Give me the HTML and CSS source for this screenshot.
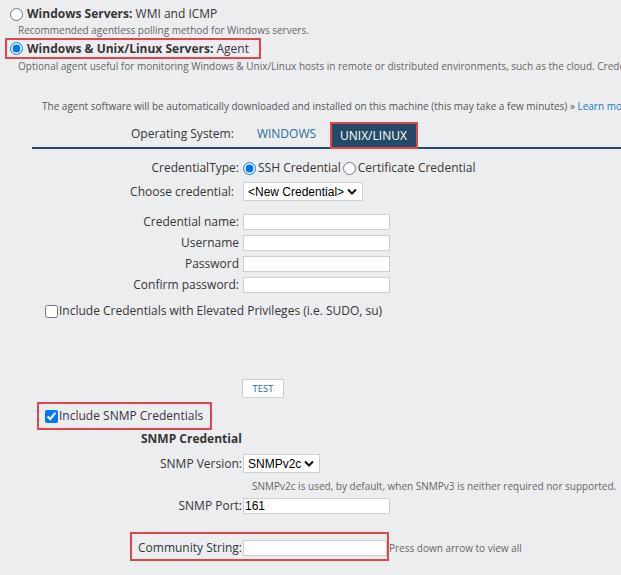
FILE: index.html
```html
<!DOCTYPE html>
<html lang="en">
<head>
    <meta charset="UTF-8">
    <title>Add Node - Polling Method</title>
    <link rel="stylesheet" href="styles.css">
</head>
<body>
    <!-- Polling method -->
    <div class="method">
        <label class="method-title"><input type="radio" name="method"><b>Windows Servers:</b>&nbsp;WMI and ICMP</label>
        <div class="method-desc">Recommended agentless polling method for Windows servers.</div>
    </div>
    <div class="method">
        <label class="method-title boxed"><input type="radio" name="method" checked><b>Windows &amp; Unix/Linux Servers:</b>&nbsp;Agent</label>
        <div class="method-desc nowrap">Optional agent useful for monitoring Windows &amp; Unix/Linux hosts in remote or distributed environments, such as the cloud. Credentials are required.</div>
    </div>

    <div class="agent-note">The agent software will be automatically downloaded and installed on this machine (this may take a few minutes) &raquo; <a href="#">Learn more</a></div>

    <div class="os-tabs">
        <span class="os-label">Operating System:</span>
        <span class="tab">WINDOWS</span>
        <span class="tab active">UNIX/LINUX</span>
    </div>

    <div class="form">
        <div class="row row-type">
            <span class="lbl">CredentialType:</span>
            <span class="ctl">
                <label><input type="radio" name="ctype" checked>SSH Credential</label>
                <label><input type="radio" name="ctype">Certificate Credential</label>
            </span>
        </div>
        <div class="row row-choose">
            <span class="lbl choose">Choose credential:</span>
            <span class="sel-wrap">
                <select class="sel-cred"><option>&lt;New Credential&gt;</option></select>
                <svg class="chev" width="10" height="7" viewBox="0 0 10 7"><path d="M1 1.5 L5 5.5 L9 1.5" fill="none" stroke="#111" stroke-width="2"/></svg>
            </span>
        </div>
        <div class="row first-field">
            <span class="lbl">Credential name:</span>
            <span class="ctl"><input type="text" class="txt"></span>
        </div>
        <div class="row field">
            <span class="lbl">Username</span>
            <span class="ctl"><input type="text" class="txt"></span>
        </div>
        <div class="row field">
            <span class="lbl">Password</span>
            <span class="ctl"><input type="password" class="txt"></span>
        </div>
        <div class="row field">
            <span class="lbl">Confirm password:</span>
            <span class="ctl"><input type="password" class="txt"></span>
        </div>
    </div>

    <label class="check sudo"><input type="checkbox">Include Credentials with Elevated Privileges (i.e. SUDO, su)</label>

    <div class="test-row"><button class="btn-test">TEST</button></div>

    <label class="check snmp boxed"><input type="checkbox" checked>Include SNMP Credentials</label>

    <div class="form snmp-form">
        <div class="snmp-title">SNMP Credential</div>
        <div class="row row-version">
            <span class="lbl tight">SNMP Version:</span>
            <span class="sel-wrap">
                <select class="sel-ver"><option>SNMPv2c</option></select>
                <svg class="chev" width="10" height="7" viewBox="0 0 10 7"><path d="M1 1.5 L5 5.5 L9 1.5" fill="none" stroke="#111" stroke-width="2"/></svg>
            </span>
        </div>
        <div class="hint">SNMPv2c is used, by default, when SNMPv3 is neither required nor supported.</div>
        <div class="row row-port">
            <span class="lbl tight">SNMP Port:</span>
            <input type="text" class="txt port" value="161">
        </div>
        <div class="row row-community">
            <span class="community boxed">
                <span class="lbl">Community String:</span>
                <input type="text" class="txt">
            </span>
            <span class="press">Press down arrow to view all</span>
        </div>
    </div>
</body>
</html>
```

FILE: styles.css
```css
body {
    margin: 0;
    padding: 5px 0 0 0;
    background-color: #ecedef;
    font-family: "Open Sans", Arial, sans-serif;
    font-size: 12px;
    line-height: 16px;
    color: #363636;
    overflow: hidden;
    width: 621px;
    height: 575px;
}

.boxed {
    outline: 2px solid #e0474c;
}

/* polling method */
.method {
    margin-left: 9px;
}

.method-title {
    display: flex;
    width: fit-content;
    align-items: center;
    font-size: 12px;
    height: 18px;
    white-space: nowrap;
}

.method-title b {
    font-weight: 700;
}

.method-title input {
    width: 13px;
    height: 13px;
    margin: 0 4px 0 1px;
}

.method-title.boxed {
    margin-top: 3px;
    margin-left: -2px;
    padding: 0 10px 0 2px;
    height: 17px;
}

.method-desc {
    font-size: 10px;
    line-height: 13px;
    color: #666;
    margin: 1px 0 0 9px;
}

.method-title.boxed + .method-desc {
    margin-top: 3px;
}

.nowrap {
    white-space: nowrap;
}

.agent-note {
    font-size: 10px;
    line-height: 13px;
    color: #555;
    margin: 27px 0 0 42px;
    white-space: nowrap;
}

.agent-note a {
    color: #1a7ab8;
    text-decoration: none;
}

/* OS tabs */
.os-tabs {
    display: flex;
    align-items: flex-end;
    margin: 8px 0 0 32px;
    border-bottom: 2px solid #234a66;
    height: 26px;
    font-size: 12px;
}

.os-label {
    margin-left: 99px;
    padding-bottom: 5px;
}

.tab {
    margin-left: 23px;
    padding-bottom: 5px;
    color: #2b6d94;
}

.tab.active {
    margin-left: 16px;
    height: 23px;
    box-sizing: border-box;
    background: #234a66;
    color: #fff;
    padding: 4px 9px 0 8px;
    outline: 2px solid #e0474c;
}

/* credential form */
.form {
    margin-left: 32px;
}

.row {
    display: flex;
    align-items: center;
}

.lbl {
    width: 207px;
    text-align: right;
    flex-shrink: 0;
}

.lbl.choose {
    width: 202px;
    margin-right: 9px;
}

.lbl.tight {
    width: 210px;
    margin-right: 1px;
}

.ctl {
    margin-left: 4px;
    display: flex;
    align-items: center;
}

.row-type {
    margin-top: 11px;
}

.row-choose {
    margin-top: 6px;
}

.ctl label {
    display: inline-flex;
    align-items: center;
    margin-right: 2px;
}

.ctl input[type="radio"] {
    width: 13px;
    height: 13px;
    margin: 0 2px 0 0;
}

.sel-wrap {
    position: relative;
    display: inline-flex;
}

select {
    appearance: none;
    -webkit-appearance: none;
    font-family: "Liberation Sans", Arial, sans-serif;
    font-size: 12px;
    color: #000;
    background: #fff;
    border: 1px solid #cfcfcf;
    height: 19px;
    padding: 0 0 0 4px;
    margin: 0;
    box-sizing: border-box;
}

.chev {
    position: absolute;
    right: 6px;
    top: 6px;
    pointer-events: none;
}

.sel-cred {
    width: 120px;
}

.sel-ver {
    width: 77px;
}

.txt {
    width: 147px;
    height: 16px;
    box-sizing: border-box;
    border: 1px solid #cfcfcf;
    background: #fff;
    font-family: "Liberation Sans", Arial, sans-serif;
    font-size: 12px;
    color: #000;
    padding: 0 1px;
    margin: 0;
}

.first-field {
    margin-top: 13px;
}

.field {
    margin-top: 5px;
}

.check {
    display: flex;
    align-items: center;
    width: fit-content;
    margin-left: 44px;
}

.check input {
    width: 13px;
    height: 13px;
    margin: 0 1px;
}

.sudo {
    margin-top: 10px;
}

.test-row {
    margin: 60px 0 0 242px;
    height: 19px;
}

.btn-test {
    display: block;
    width: 42px;
    height: 19px;
    background: #fff;
    border: 1px solid #cfcfcf;
    font-family: "Open Sans", Arial, sans-serif;
    font-size: 9.5px;
    color: #2b6d94;
    padding: 0;
}

.snmp {
    width: 165px;
    padding: 4px 0 4px 6px;
    margin-top: 6px;
    margin-left: 39px;
}

.snmp input {
    margin-left: 0;
}

.snmp-title {
    font-weight: bold;
    margin: 3px 0 0 109px;
}

.row-version {
    margin-top: 7px;
}

.hint {
    font-size: 10px;
    line-height: 13px;
    color: #666;
    margin: 7px 0 0 220px;
    white-space: nowrap;
}

.row-port {
    margin-top: 5px;
}

.row-community {
    margin-top: 20px;
}

.community {
    display: flex;
    align-items: center;
    margin-left: 100px;
    padding: 6px 0 3px 6px;
    white-space: nowrap;
}

.community .lbl {
    width: auto;
    margin-right: 1px;
}

.community .txt {
    width: 144px;
}

.press {
    font-size: 10px;
    color: #666;
    margin-left: 2px;
    padding-top: 3px;
    white-space: nowrap;
}
```
